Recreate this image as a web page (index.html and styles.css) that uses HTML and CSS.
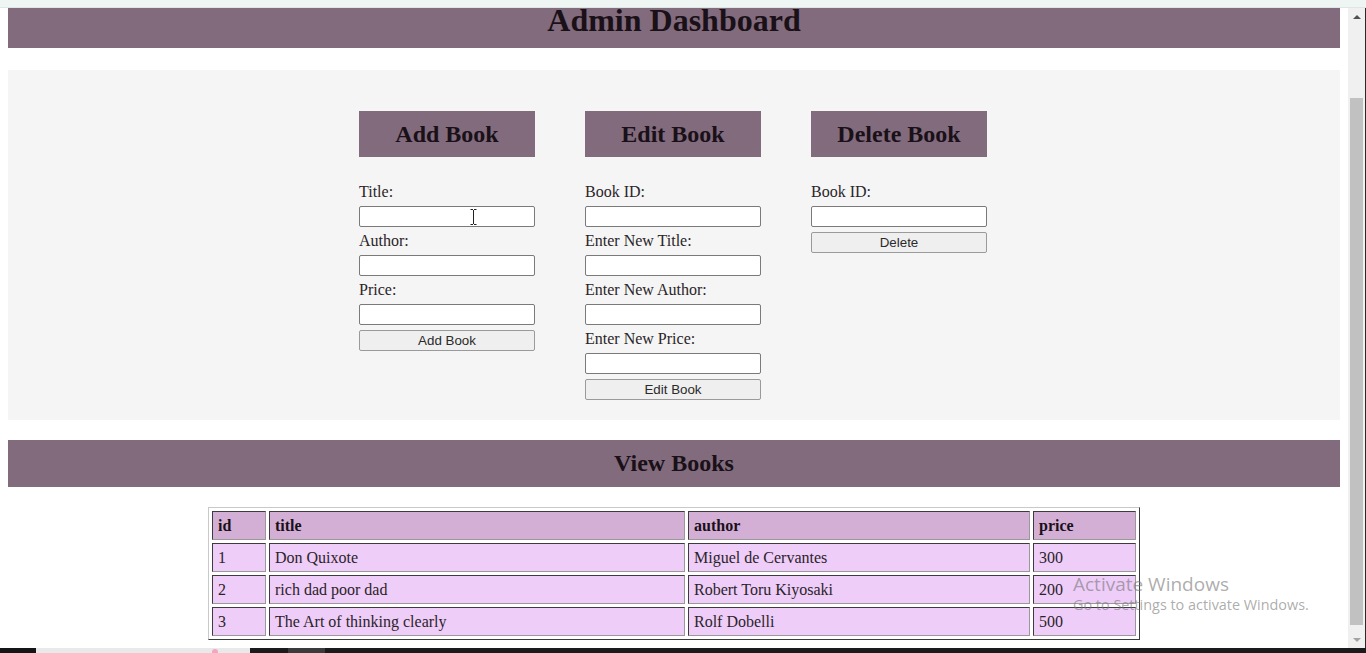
FILE: index.html
```html
<!DOCTYPE html>
<html lang="en">
<head>
<meta charset="utf-8">
<title>Admin Dashboard</title>
<link rel="stylesheet" href="styles.css">
</head>
<body>
<div class="topstrip"></div>
<div class="window">
  <div class="page">
    <h1 class="banner">Admin Dashboard</h1>
    <section class="forms">
      <div class="col">
        <h2 class="col-title">Add Book</h2>
        <label class="lbl">Title:</label>
        <div class="field-wrap">
          <input class="field" type="text">
          <svg class="ibeam" width="7" height="16" viewBox="0 0 7 16"><path d="M0.5 0.5h2.5M4 0.5h2.5M3.5 1v14M0.5 15.5h2.5M4 15.5h2.5" stroke="#222" stroke-width="1" fill="none"/></svg>
        </div>
        <label class="lbl">Author:</label>
        <input class="field" type="text">
        <label class="lbl">Price:</label>
        <input class="field" type="text">
        <button class="btn">Add Book</button>
      </div>
      <div class="col">
        <h2 class="col-title">Edit Book</h2>
        <label class="lbl">Book ID:</label>
        <input class="field" type="text">
        <label class="lbl">Enter New Title:</label>
        <input class="field" type="text">
        <label class="lbl">Enter New Author:</label>
        <input class="field" type="text">
        <label class="lbl">Enter New Price:</label>
        <input class="field" type="text">
        <button class="btn">Edit Book</button>
      </div>
      <div class="col">
        <h2 class="col-title">Delete Book</h2>
        <label class="lbl">Book ID:</label>
        <input class="field" type="text">
        <button class="btn">Delete</button>
      </div>
    </section>
    <h2 class="banner2">View Books</h2>
    <table class="books">
      <thead>
        <tr><th class="c-id">id</th><th class="c-title">title</th><th class="c-author">author</th><th class="c-price">price</th></tr>
      </thead>
      <tbody>
        <tr><td>1</td><td>Don Quixote</td><td>Miguel de Cervantes</td><td>300</td></tr>
        <tr><td>2</td><td>rich dad poor dad</td><td>Robert Toru Kiyosaki</td><td>200</td></tr>
        <tr><td>3</td><td>The Art of thinking clearly</td><td>Rolf Dobelli</td><td>500</td></tr>
      </tbody>
    </table>
    <div class="watermark">
      <div class="wm1">Activate Windows</div>
      <div class="wm2">Go to Settings to activate Windows.</div>
    </div>
  </div>
  <div class="scrollbar">
    <div class="arrow up"></div>
    <div class="track"><div class="thumb"></div></div>
    <div class="arrow down"></div>
  </div>
</div>
<div class="taskbar">
  <div class="tb-a"></div>
  <div class="tb-b"><span class="tb-dot"></span></div>
  <div class="tb-c"></div>
  <div class="tb-d"></div>
  <div class="tb-e"></div>
</div>
</body>
</html>
```

FILE: styles.css
```css
html, body {
  margin: 0;
  padding: 0;
  height: 653px;
  overflow: hidden;
  background: #ffffff;
  font-family: "Liberation Serif", "Times New Roman", serif;
  color: #1e1a1d;
}

.topstrip {
  height: 7px;
  background: #eef5f2;
  border-bottom: 1px solid #dde7e3;
}

.window {
  display: flex;
  height: 640px;
}

.page {
  position: relative;
  flex: 1;
  padding: 0 8px;
  display: flex;
  flex-direction: column;
}

.banner {
  margin: 0;
  height: 40px;
  background: #816b7c;
  font-size: 32px;
  line-height: 24px;
  font-weight: bold;
  text-align: center;
  color: #1a1018;
  overflow: visible;
}

.forms {
  margin-top: 22px;
  height: 350px;
  box-sizing: border-box;
  background: #f5f5f5;
  padding-top: 41px;
  padding-right: 2px;
  display: flex;
  justify-content: center;
  gap: 50px;
}

.col {
  width: 176px;
  display: flex;
  flex-direction: column;
}

.col-title {
  margin: 0 0 26px 0;
  height: 46px;
  line-height: 46px;
  background: #816b7c;
  font-size: 24px;
  font-weight: bold;
  text-align: center;
  color: #1a1018;
}

.lbl {
  display: block;
  height: 18px;
  line-height: 18px;
  font-size: 16px;
  color: #2a2428;
  margin-bottom: 5px;
}

.field-wrap {
  position: relative;
  margin-bottom: 5px;
}

.field-wrap .field {
  margin-bottom: 0;
}

.ibeam {
  position: absolute;
  left: 111px;
  top: 3px;
}

.field {
  display: block;
  box-sizing: border-box;
  width: 176px;
  height: 21px;
  margin: 0 0 5px 0;
  padding: 0 3px;
  border: 1px solid #7a7a7a;
  border-radius: 2px;
  background: #ffffff;
}

.btn {
  display: block;
  box-sizing: border-box;
  width: 176px;
  height: 21px;
  margin: 0;
  padding: 0;
  border: 1px solid #9a9a9a;
  border-radius: 2px;
  background: #efefef;
  font-family: "Liberation Sans", Arial, sans-serif;
  font-size: 13.33px;
  color: #2a2a2a;
}

.banner2 {
  margin: 20px 0 0 0;
  height: 47px;
  line-height: 47px;
  background: #816b7c;
  font-size: 24px;
  font-weight: bold;
  text-align: center;
  color: #1a1018;
}

.books {
  margin: 20px auto 0 auto;
  width: 932px;
  table-layout: fixed;
  border-collapse: separate;
  border-spacing: 3px;
  border-style: solid;
  border-width: 1px;
  border-color: #c9c9c9 #3c3c3c #3c3c3c #c9c9c9;
  background: #ffffff;
  font-size: 16px;
}

.books th,
.books td {
  text-align: left;
  padding: 4px 5px;
  line-height: 19px;
  height: 19px;
  border-style: solid;
  border-width: 1px;
  border-color: #3e3a3d #9b979a #9b979a #3e3a3d;
  white-space: nowrap;
}

.books th {
  background: #d3afd6;
  font-weight: bold;
  color: #1a1018;
}

.books td {
  background: #efcdf9;
  color: #2a2428;
}

.c-id { width: 42px; }
.c-title { width: 404px; }
.c-author { width: 330px; }
.c-price { width: 91px; }

.watermark {
  position: absolute;
  left: 1073px;
  top: 566px;
  font-family: "Open Sans", "Noto Sans", sans-serif;
  color: rgba(120, 120, 120, 0.62);
  pointer-events: none;
}

.wm1 {
  font-size: 19px;
  line-height: 24px;
  margin-top: -2px;
}

.wm2 {
  font-size: 14.4px;
  line-height: 20px;
  margin-top: -1px;
}

.scrollbar {
  width: 18px;
  background: #f0f0f0;
  display: flex;
  flex-direction: column;
  border-right: 1px solid #2a2a2a;
  box-sizing: border-box;
}

.arrow {
  height: 17px;
  display: flex;
  align-items: center;
  justify-content: center;
}

.arrow::before {
  content: "";
  width: 0;
  height: 0;
  border-left: 4px solid transparent;
  border-right: 4px solid transparent;
}

.arrow.up::before {
  border-bottom: 4px solid #505050;
}

.arrow.down::before {
  border-top: 4px solid #a3a3a3;
}

.track {
  flex: 1;
  padding: 73px 2px 6px 2px;
  display: flex;
}

.thumb {
  flex: 1;
  background: #c1c1c1;
}

.taskbar {
  height: 5px;
  display: flex;
}

.tb-a { width: 36px; background: #151515; }
.tb-b {
  width: 214px;
  background: #e9e9e9;
  position: relative;
}
.tb-dot {
  position: absolute;
  left: 176px;
  top: 1px;
  width: 6px;
  height: 4px;
  border-radius: 3px 3px 0 0;
  background: #f2a6c0;
}
.tb-c { width: 38px; background: #1b1b1b; }
.tb-d { width: 37px; background: #3b3b3b; }
.tb-e { flex: 1; background: #1b1b1b; }
```
